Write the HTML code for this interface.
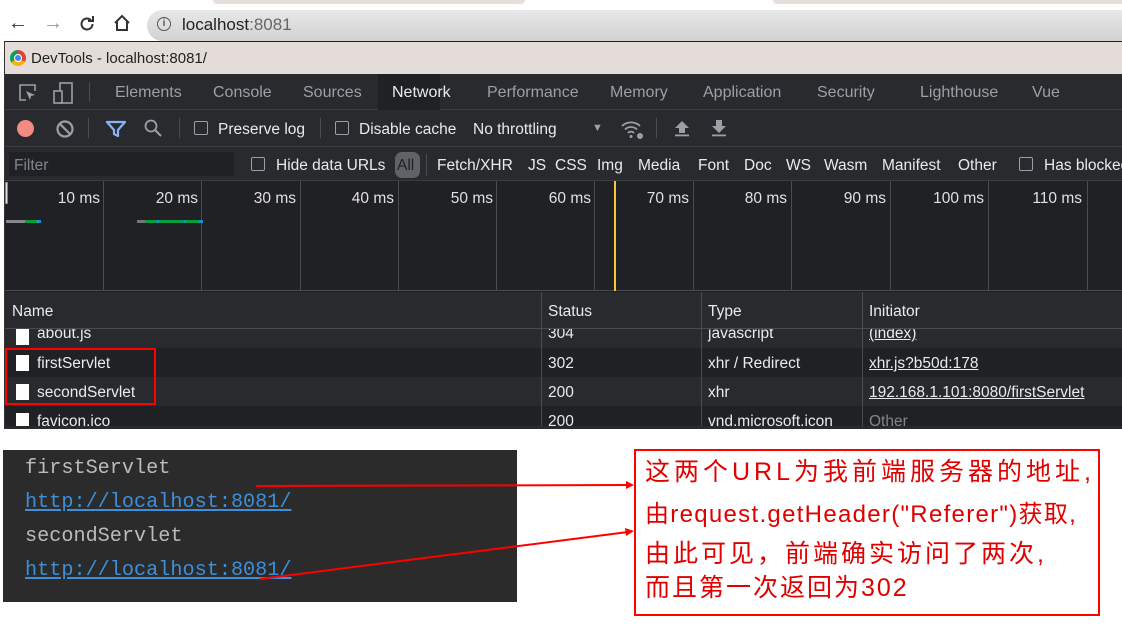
<!DOCTYPE html>
<html><head><meta charset="utf-8"><style>
*{margin:0;padding:0;box-sizing:border-box}
body{width:1122px;height:626px;background:#fff;position:relative;overflow:hidden;font-family:"Liberation Sans","Noto Sans CJK SC",sans-serif;}
.a{position:absolute;white-space:nowrap}
.t{color:#9aa0a6;font-size:16px}
.w{color:#e8eaed;font-size:15.5px}
.cb{position:absolute;width:14px;height:14px;border:1.5px solid #9aa0a6;border-radius:2px}
.vl{position:absolute;width:1px;background:#4a4c50}
.ms{position:absolute;color:#e0e0e0;font-size:15.5px;text-align:right;width:90px;top:190px}
.row{position:absolute;left:5px;width:1117px;height:29px;color:#e8eaed;font-size:15.5px}
.row span{position:absolute;top:7px}
.ic{position:absolute;left:11px;top:7px;width:13px;height:16px;background:#fff}
.code{font-family:"Liberation Mono","DejaVu Sans Mono",monospace;font-size:20.2px;position:absolute;left:25px}
.lnk{color:#3d8fd9;text-decoration:underline}
.cn{font-family:"Liberation Sans","Noto Sans CJK SC",sans-serif;color:#e00000;font-size:25px;position:absolute;left:645px}
.f{top:157px}
</style></head><body>
<div class="a" style="left:213px;top:0;width:312px;height:4px;background:#e6deda;border-radius:0 0 6px 6px"></div>
<div class="a" style="left:773px;top:0;width:349px;height:4px;background:#e6deda;border-radius:0 0 0 6px"></div>
<div class="a" style="left:8px;top:12px;font-size:20px;color:#333">&#8592;</div>
<div class="a" style="left:43px;top:12px;font-size:20px;color:#999">&#8594;</div>
<svg class="a" style="left:78px;top:15px" width="18" height="18" viewBox="0 0 18 18"><path d="M14.5 9a5.5 5.5 0 1 1-1.6-3.9" fill="none" stroke="#333" stroke-width="2"/><path d="M10 4h5V-1" transform="translate(0,2)" fill="none" stroke="#333" stroke-width="2"/></svg>
<svg class="a" style="left:113px;top:14px" width="18" height="18" viewBox="0 0 18 18"><path d="M2 9L9 2l7 7M4 7.5V16h10V7.5" fill="none" stroke="#333" stroke-width="2"/></svg>
<div class="a" style="left:147px;top:10px;width:975px;height:31px;border-radius:16px 0 0 16px;background:linear-gradient(#e8e8e8,#d2d2d2)"></div>
<div class="a" style="left:157px;top:17px;width:14px;height:14px;border:1.5px solid #555;border-radius:50%;font-size:10px;line-height:11px;text-align:center;color:#555;font-weight:bold">i</div>
<div class="a" style="left:182px;top:15px;font-size:17px;color:#222">localhost<span style="color:#666">:8081</span></div>
<div class="a" style="left:4px;top:41px;width:1118px;height:388px;background:#202124;border-left:1px solid #333;border-top:1px solid #222"></div>
<div class="a" style="left:5px;top:42px;width:1117px;height:32px;background:#e4dcd9"></div>
<div class="a" style="left:10px;top:50px;width:16px;height:16px;border-radius:50%;background:conic-gradient(#db4437 0 33%,#f4b400 33% 66%,#0f9d58 66%)"></div>
<div class="a" style="left:14px;top:54px;width:8px;height:8px;border-radius:50%;background:#4285f4;border:1.5px solid #fff"></div>
<div class="a" style="left:31px;top:50px;font-size:15px;color:#222">DevTools - localhost:8081/</div>
<div class="a" style="left:5px;top:74px;width:1117px;height:36px;background:#292a2d;border-bottom:1px solid #3c3c3c"></div>
<svg class="a" style="left:17px;top:82px" width="22" height="22" viewBox="0 0 22 22"><path d="M9 18H3V3h15v6" fill="none" stroke="#9aa0a6" stroke-width="1.6"/><path d="M9 9l9 4-4 1-1 4z" fill="#9aa0a6"/></svg>
<svg class="a" style="left:51px;top:81px" width="24" height="24" viewBox="0 0 24 24"><rect x="9" y="2" width="12" height="20" fill="none" stroke="#9aa0a6" stroke-width="1.6"/><rect x="3" y="10" width="8" height="12" fill="#292a2d" stroke="#9aa0a6" stroke-width="1.6"/></svg>
<div class="vl" style="left:89px;top:82px;height:20px"></div>
<div class="a" style="left:378px;top:74px;width:62px;height:36px;background:#202124"></div>
<div class="a t" style="left:115px;top:84px">Elements</div>
<div class="a t" style="left:213px;top:84px">Console</div>
<div class="a t" style="left:303px;top:84px">Sources</div>
<div class="a" style="left:392px;top:84px;font-size:16px;color:#e8eaed">Network</div>
<div class="a t" style="left:487px;top:84px">Performance</div>
<div class="a t" style="left:610px;top:84px">Memory</div>
<div class="a t" style="left:703px;top:84px">Application</div>
<div class="a t" style="left:817px;top:84px">Security</div>
<div class="a t" style="left:920px;top:84px">Lighthouse</div>
<div class="a t" style="left:1032px;top:84px">Vue</div>
<div class="a" style="left:5px;top:110px;width:1117px;height:37px;background:#292a2d;border-bottom:1px solid #3c3c3c"></div>
<div class="a" style="left:17px;top:120px;width:17px;height:17px;border-radius:50%;background:#f28b82"></div>
<svg class="a" style="left:55px;top:119px" width="20" height="20" viewBox="0 0 20 20"><circle cx="10" cy="10" r="7.5" fill="none" stroke="#9aa0a6" stroke-width="2.2"/><path d="M5 5l10 10" stroke="#9aa0a6" stroke-width="2.2"/></svg>
<div class="vl" style="left:88px;top:118px;height:20px"></div>
<svg class="a" style="left:105px;top:119px" width="22" height="20" viewBox="0 0 22 20"><path d="M2 3h18l-7 8v6l-4-2v-4z" fill="none" stroke="#8ab4f8" stroke-width="2.2" stroke-linejoin="round"/></svg>
<svg class="a" style="left:143px;top:118px" width="20" height="20" viewBox="0 0 20 20"><circle cx="8" cy="8" r="5.5" fill="none" stroke="#9aa0a6" stroke-width="1.8"/><path d="M12 12l6 6" stroke="#9aa0a6" stroke-width="2"/></svg>
<div class="vl" style="left:179px;top:118px;height:20px"></div>
<div class="cb" style="left:194px;top:121px"></div>
<div class="a w" style="left:218px;top:121px">Preserve log</div>
<div class="vl" style="left:320px;top:118px;height:20px"></div>
<div class="cb" style="left:335px;top:121px"></div>
<div class="a w" style="left:359px;top:121px">Disable cache</div>
<div class="a w" style="left:473px;top:121px">No throttling</div>
<div class="a" style="left:592px;top:122px;font-size:11px;color:#9aa0a6">&#9660;</div>
<svg class="a" style="left:620px;top:118px" width="26" height="24" viewBox="0 0 26 24"><path d="M2 8a13 13 0 0 1 18 0M5 11.5a8.5 8.5 0 0 1 12 0M8 15a4 4 0 0 1 6 0" fill="none" stroke="#9aa0a6" stroke-width="1.8"/><circle cx="11" cy="18.5" r="1.5" fill="#9aa0a6"/><circle cx="20" cy="18" r="3" fill="#9aa0a6"/></svg>
<div class="vl" style="left:656px;top:118px;height:20px"></div>
<svg class="a" style="left:673px;top:119px" width="18" height="18" viewBox="0 0 18 18"><path d="M9 2l-7 7h4v5h6V9h4z" fill="#9aa0a6"/><rect x="2" y="15.5" width="14" height="1.8" fill="#9aa0a6"/></svg>
<svg class="a" style="left:710px;top:119px" width="18" height="18" viewBox="0 0 18 18"><path d="M9 14l-7-7h4V1h6v6h4z" fill="#9aa0a6"/><rect x="2" y="15.5" width="14" height="1.8" fill="#9aa0a6"/></svg>
<div class="a" style="left:5px;top:147px;width:1117px;height:34px;background:#292a2d;border-bottom:1px solid #3c3c3c"></div>
<div class="a" style="left:9px;top:152px;width:225px;height:24px;background:#202124"></div>
<div class="a" style="left:14px;top:157px;font-size:15.5px;color:#80868b">Filter</div>
<div class="cb" style="left:251px;top:157px"></div>
<div class="a w f" style="left:276px">Hide data URLs</div>
<div class="a" style="left:395px;top:152px;width:25px;height:26px;border-radius:7px;background:#5f6368"></div>
<div class="a f" style="left:397px;font-size:15.5px;color:#202124">All</div>
<div class="vl" style="left:426px;top:154px;height:22px"></div>
<div class="a w f" style="left:437px">Fetch/XHR</div>
<div class="a w f" style="left:528px">JS</div>
<div class="a w f" style="left:555px">CSS</div>
<div class="a w f" style="left:597px">Img</div>
<div class="a w f" style="left:638px">Media</div>
<div class="a w f" style="left:698px">Font</div>
<div class="a w f" style="left:744px">Doc</div>
<div class="a w f" style="left:786px">WS</div>
<div class="a w f" style="left:824px">Wasm</div>
<div class="a w f" style="left:882px">Manifest</div>
<div class="a w f" style="left:958px">Other</div>
<div class="cb" style="left:1019px;top:157px"></div>
<div class="a w f" style="left:1044px">Has blocked</div>
<div class="a" style="left:5px;top:181px;width:1117px;height:110px;background:#202124;border-bottom:1px solid #494c50"></div>
<div class="a" style="left:5px;top:182px;width:3px;height:22px;background:#ddd;border:1px solid #888"></div>
<div class="vl" style="left:103px;top:181px;height:110px"></div>
<div class="vl" style="left:201px;top:181px;height:110px"></div>
<div class="vl" style="left:300px;top:181px;height:110px"></div>
<div class="vl" style="left:398px;top:181px;height:110px"></div>
<div class="vl" style="left:496px;top:181px;height:110px"></div>
<div class="vl" style="left:594px;top:181px;height:110px"></div>
<div class="vl" style="left:693px;top:181px;height:110px"></div>
<div class="vl" style="left:791px;top:181px;height:110px"></div>
<div class="vl" style="left:890px;top:181px;height:110px"></div>
<div class="vl" style="left:988px;top:181px;height:110px"></div>
<div class="vl" style="left:1087px;top:181px;height:110px"></div>
<div class="a" style="left:614px;top:181px;width:2px;height:110px;background:#f9c33a"></div>
<div class="ms" style="left:10px">10 ms</div>
<div class="ms" style="left:108px">20 ms</div>
<div class="ms" style="left:206px">30 ms</div>
<div class="ms" style="left:304px">40 ms</div>
<div class="ms" style="left:403px">50 ms</div>
<div class="ms" style="left:501px">60 ms</div>
<div class="ms" style="left:599px">70 ms</div>
<div class="ms" style="left:697px">80 ms</div>
<div class="ms" style="left:796px">90 ms</div>
<div class="ms" style="left:894px">100 ms</div>
<div class="ms" style="left:992px">110 ms</div>
<div class="a" style="left:6px;top:220px;width:35px;height:3px;background:#888"></div>
<div class="a" style="left:25px;top:220px;width:12px;height:3px;background:#0a9d3f"></div>
<div class="a" style="left:38px;top:220px;width:3px;height:3px;background:#1a8fd6"></div>
<div class="a" style="left:137px;top:220px;width:66px;height:3px;background:#0a9d3f"></div>
<div class="a" style="left:137px;top:220px;width:8px;height:3px;background:#777"></div>
<div class="a" style="left:157px;top:220px;width:2px;height:3px;background:#1a8fd6"></div>
<div class="a" style="left:184px;top:220px;width:2px;height:3px;background:#1a8fd6"></div>
<div class="a" style="left:199px;top:220px;width:4px;height:3px;background:#1a8fd6"></div>
<div class="a" style="left:5px;top:292px;width:1117px;height:37px;background:#292a2d;border-bottom:1px solid #494c50"></div>
<div class="a w" style="left:12px;top:303px">Name</div>
<div class="a w" style="left:548px;top:303px">Status</div>
<div class="a w" style="left:708px;top:303px">Type</div>
<div class="a w" style="left:869px;top:303px">Initiator</div>
<div class="row" style="top:329px;height:19px;overflow:hidden;background:#292a2d"><div class="ic" style="top:0"></div><span style="left:32px;top:-4px">about.js</span><span style="left:543px;top:-4px">304</span><span style="left:703px;top:-4px">javascript</span><span style="left:864px;top:-4px;text-decoration:underline">(index)</span></div>
<div class="row" style="top:348px;background:#202124"><div class="ic"></div><span style="left:32px">firstServlet</span><span style="left:543px">302</span><span style="left:703px">xhr / Redirect</span><span style="left:864px;text-decoration:underline">xhr.js?b50d:178</span></div>
<div class="row" style="top:377px;background:#292a2d"><div class="ic"></div><span style="left:32px">secondServlet</span><span style="left:543px">200</span><span style="left:703px">xhr</span><span style="left:864px;text-decoration:underline">192.168.1.101:8080/firstServlet</span></div>
<div class="row" style="top:406px;height:20px;overflow:hidden;background:#202124"><div class="ic"></div><span style="left:32px">favicon.ico</span><span style="left:543px">200</span><span style="left:703px">vnd.microsoft.icon</span><span style="left:864px;color:#80868b">Other</span></div>
<div class="a" style="left:5px;top:426px;width:1117px;height:3px;background:#292a2d"></div>
<div class="vl" style="left:541px;top:292px;height:134px"></div>
<div class="vl" style="left:701px;top:292px;height:134px"></div>
<div class="vl" style="left:862px;top:292px;height:134px"></div>
<div class="a" style="left:5px;top:348px;width:151px;height:57px;border:2px solid #f00"></div>
<div class="a" style="left:3px;top:450px;width:514px;height:152px;background:#2b2b2b"></div>
<div class="code" style="top:457px;color:#bbbbbb">firstServlet</div>
<div class="code lnk" style="top:491px">http://localhost:8081/</div>
<div class="code" style="top:525px;color:#bbbbbb">secondServlet</div>
<div class="code lnk" style="top:559px">http://localhost:8081/</div>
<svg class="a" style="left:0;top:0" width="1122" height="626"><g stroke="#f00" stroke-width="2" fill="#f00"><line x1="256" y1="486" x2="628" y2="485"/><path d="M634 485l-8-4v8z" stroke="none"/><line x1="260" y1="579" x2="628" y2="532"/><path d="M634 531l-9-3 1 8z" stroke="none"/></g></svg>
<div class="a" style="left:634px;top:449px;width:466px;height:167px;border:2px solid #f00"></div>
<div class="cn" style="top:452px;letter-spacing:4px">这两个URL为我前端服务器的地址,</div>
<div class="cn" style="top:494px;font-size:24px;letter-spacing:1.3px">由request.getHeader("Referer")获取,</div>
<div class="cn" style="top:534px;letter-spacing:3px">由此可见，前端确实访问了两次,</div>
<div class="cn" style="top:568px;letter-spacing:2px">而且第一次返回为302</div>
</body></html>
